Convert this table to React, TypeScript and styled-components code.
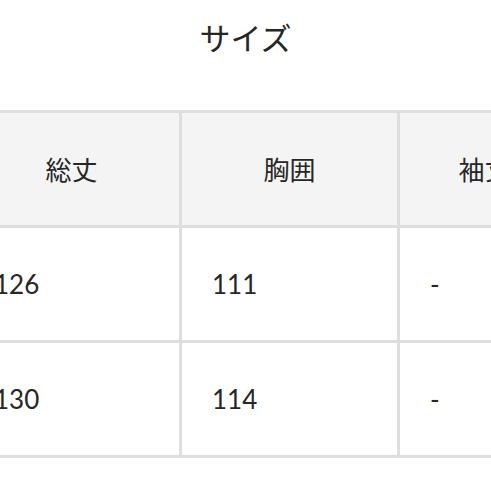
import React from "react";
import styled, { createGlobalStyle } from "styled-components";

const Global = createGlobalStyle`
  html, body { margin: 0; padding: 0; background: #fff; }
  body { font-family: Lato, "Noto Sans CJK JP", sans-serif; color: #2b2b2b; }
`;

const Page = styled.div`
  width: 491px;
  height: 491px;
  overflow: hidden;
`;

const Title = styled.h2`
  margin: 0;
  height: 110px;
  padding-top: 15px;
  box-sizing: border-box;
  text-align: center;
  font-family: "Noto Sans CJK JP", sans-serif;
  font-weight: 400;
  font-size: 31px;
  line-height: 44px;
  color: #262626;
`;

const Table = styled.table`
  margin-left: -39px;
  border-collapse: collapse;
  table-layout: fixed;
  width: 608px;
`;

const Col = styled.col<{ $w: number }>`
  width: ${(p) => p.$w}px;
`;

const Th = styled.th`
  height: 115px;
  box-sizing: border-box;
  border: 3px solid #dedede;
  background: #f4f4f4;
  font-family: "Noto Sans CJK JP", sans-serif;
  font-weight: 400;
  font-size: 26px;
  line-height: 30px;
  text-align: center;
  padding: 0;
  color: #262626;
`;

const Td = styled.td`
  height: 115px;
  box-sizing: border-box;
  border: 3px solid #dedede;
  font-family: Lato, "Noto Sans CJK JP", sans-serif;
  font-size: 26px;
  line-height: 30px;
  text-align: left;
  padding: 0 0 0 30px;
  color: #262626;
`;

const rows = [
  ["126", "111", "-"],
  ["130", "114", "-"],
];

export default function App() {
  return (
    <Page>
      <Global />
      <Title>サイズ</Title>
      <Table>
        <colgroup>
          <Col $w={218} />
          <Col $w={218} />
          <Col $w={172} />
        </colgroup>
        <thead>
          <tr>
            <Th>総丈</Th>
            <Th>胸囲</Th>
            <Th>袖丈</Th>
          </tr>
        </thead>
        <tbody>
          {rows.map((r, i) => (
            <tr key={i}>
              {r.map((c, j) => (
                <Td key={j}>{c}</Td>
              ))}
            </tr>
          ))}
        </tbody>
      </Table>
    </Page>
  );
}
